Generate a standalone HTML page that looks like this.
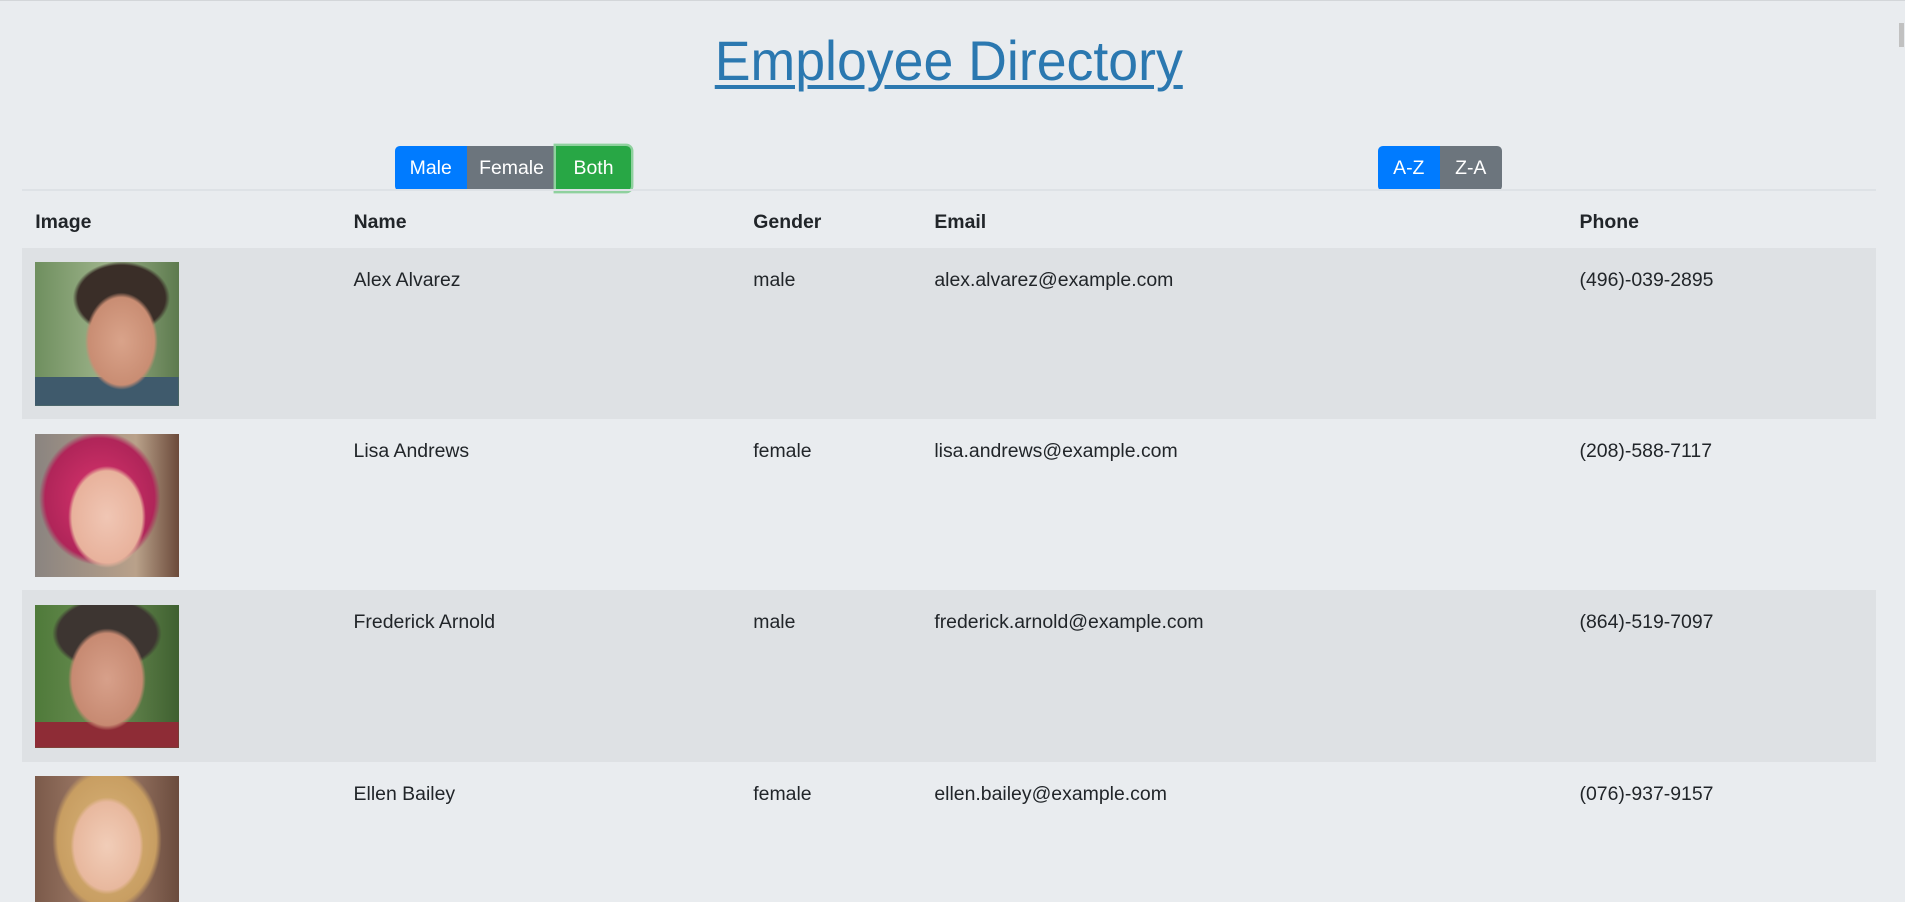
<!DOCTYPE html>
<html><head><meta charset="utf-8"><style>
html,body{margin:0;padding:0;background:#e9ecef;overflow:hidden}
#w{zoom:1.215;width:1568px;height:742px;position:relative;font-family:"Liberation Sans",sans-serif;color:#212529;border-top:1px solid #d3d6d9;box-sizing:border-box}
h1{position:absolute;left:0;width:1561px;top:21px;margin:0;text-align:center;font-weight:normal;font-size:46px;line-height:56px}
h1 a{color:#2b78b0;text-decoration:underline;text-decoration-thickness:3px;text-underline-offset:4px;display:inline-block;transform:scaleX(0.96)}
.btn{position:absolute;top:119px;height:37px;line-height:37px;color:#fff;font-size:16px;text-align:center}
.line{position:absolute;left:18px;width:1526px;top:155px;height:1px;background:#dee2e6}
.row{position:absolute;left:18px;width:1526px;height:141px}
.s{background:#dee1e4}
.c{position:absolute;top:15px;font-size:16px;line-height:24px}
.h{position:absolute;top:170px;font-weight:bold;font-size:16px;line-height:24px}
.img{position:absolute;left:11px;top:12px;width:118px;height:118px}
.sb{position:absolute;right:0;top:0;width:6px;height:742px;background:#e9ecef}
.sb:after{content:"";position:absolute;right:1px;top:18px;width:4px;height:20px;background:#c1c1c1}
</style></head><body><div id="w">
<h1><a>Employee Directory</a></h1>
<div class="btn" style="left:325px;width:59px;background:#007bff;border-radius:4px 0 0 4px">Male</div>
<div class="btn" style="left:384px;width:74px;background:#6c757d">Female</div>
<div class="btn" style="left:458px;width:61px;background:#28a745;border-radius:0 4px 4px 0;box-shadow:0 0 0 2px #8fd19e">Both</div>
<div class="btn" style="left:1134px;width:51px;background:#007bff;border-radius:4px 0 0 4px">A-Z</div>
<div class="btn" style="left:1185px;width:51px;background:#6c757d;border-radius:0 4px 4px 0">Z-A</div>
<div class="line"></div>
<div class="h" style="left:29px">Image</div><div class="h" style="left:291px">Name</div><div class="h" style="left:620px">Gender</div><div class="h" style="left:769px">Email</div><div class="h" style="left:1300px">Phone</div>
<div class="row s" style="top:203px"><div class="img" style="background:radial-gradient(ellipse 30px 40px at 60% 55%,#d9a38a 0,#c98d73 90%,transparent 100%),radial-gradient(ellipse 40px 30px at 60% 25%,#3a2e28 0,#3a2e28 90%,transparent 100%),linear-gradient(#3f5a6c,#3f5a6c) bottom/100% 20% no-repeat,linear-gradient(90deg,#6f8f5f,#9db38a 50%,#5d7a4e)"></div>
<div class="c" style="left:273px">Alex Alvarez</div><div class="c" style="left:602px">male</div><div class="c" style="left:751px">alex.alvarez@example.com</div><div class="c" style="left:1282px">(496)-039-2895</div></div>
<div class="row" style="top:344px"><div class="img" style="background:radial-gradient(ellipse 32px 42px at 50% 58%,#f0c6b4 0,#e8b29c 90%,transparent 100%),radial-gradient(ellipse 50px 55px at 45% 45%,#d9346e 0,#b02559 90%,transparent 100%),linear-gradient(90deg,#8a8480,#b9a18a 70%,#6b4a3a)"></div>
<div class="c" style="left:273px">Lisa Andrews</div><div class="c" style="left:602px">female</div><div class="c" style="left:751px">lisa.andrews@example.com</div><div class="c" style="left:1282px">(208)-588-7117</div></div>
<div class="row s" style="top:485px"><div class="img" style="background:radial-gradient(ellipse 32px 42px at 50% 52%,#d7a08a 0,#c78a72 90%,transparent 100%),radial-gradient(ellipse 45px 30px at 50% 20%,#3d3531 0,#3d3531 90%,transparent 100%),linear-gradient(#8e2c36,#8e2c36) bottom/100% 18% no-repeat,linear-gradient(90deg,#4f7a3a,#6d8f55 50%,#3f6030)"></div>
<div class="c" style="left:273px">Frederick Arnold</div><div class="c" style="left:602px">male</div><div class="c" style="left:751px">frederick.arnold@example.com</div><div class="c" style="left:1282px">(864)-519-7097</div></div>
<div class="row" style="top:626px"><div class="img" style="height:104px;background:radial-gradient(ellipse 30px 40px at 50% 55%,#f1cdb8 0,#e8b89e 90%,transparent 100%),radial-gradient(ellipse 45px 60px at 50% 50%,#d9b47a 0,#c89e62 90%,transparent 100%),linear-gradient(90deg,#7b5a4a,#a88470 50%,#6b4c3e)"></div>
<div class="c" style="left:273px">Ellen Bailey</div><div class="c" style="left:602px">female</div><div class="c" style="left:751px">ellen.bailey@example.com</div><div class="c" style="left:1282px">(076)-937-9157</div></div>
<div class="sb"></div>
</div></body></html>
